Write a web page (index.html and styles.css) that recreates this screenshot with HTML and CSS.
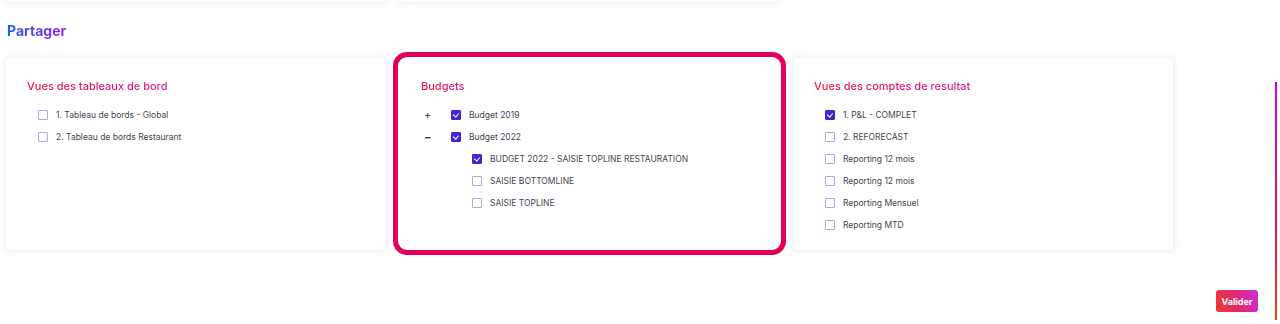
FILE: index.html
```html
<!DOCTYPE html>
<html>
<head>
    <title>Partager</title>
    <link rel="stylesheet" href="styles.css">
</head>
<body>
    <div class="top-row">
        <div class="top-card"></div>
        <div class="top-card second"></div>
    </div>

    <h2 class="section-title">Partager</h2>

    <div class="cards">
        <div class="card">
            <h3 class="card-title">Vues des tableaux de bord</h3>
            <div class="item"><span class="box"></span>1. Tableau de bords - Global</div>
            <div class="item"><span class="box"></span>2. Tableau de bords Restaurant</div>
        </div>

        <div class="card active">
            <h3 class="card-title">Budgets</h3>
            <div class="item"><span class="toggle">+</span><span class="box checked"></span>Budget 2019</div>
            <div class="item"><span class="toggle minus">&minus;</span><span class="box checked"></span>Budget 2022</div>
            <div class="item sub"><span class="box checked"></span>BUDGET 2022 - SAISIE TOPLINE RESTAURATION</div>
            <div class="item sub"><span class="box"></span>SAISIE BOTTOMLINE</div>
            <div class="item sub"><span class="box"></span>SAISIE TOPLINE</div>
        </div>

        <div class="card">
            <h3 class="card-title">Vues des comptes de resultat</h3>
            <div class="item"><span class="box checked"></span>1. P&amp;L - COMPLET</div>
            <div class="item"><span class="box"></span>2. REFORECAST</div>
            <div class="item"><span class="box"></span>Reporting 12 mois</div>
            <div class="item"><span class="box"></span>Reporting 12 mois</div>
            <div class="item"><span class="box"></span>Reporting Mensuel</div>
            <div class="item"><span class="box"></span>Reporting MTD</div>
        </div>
    </div>

    <div class="actions">
        <button class="btn">Valider</button>
    </div>

    <div class="scroll-bar"></div>
</body>
</html>
```

FILE: styles.css
```css
body { margin: 0; font-family: Inter, "Noto Sans", sans-serif; background: #fff; color: #454552; overflow: hidden; }
.top-row { display: flex; gap: 14px; padding-left: 6px; margin-top: -40px; height: 42px; }
.top-card { width: 380px; height: 42px; background: #fff; border-radius: 4px; box-shadow: 0 0 6px rgba(120, 100, 220, 0.18); }
.section-title { width: fit-content; margin: 20px 0 0 7px; font-size: 14px; font-weight: 700; line-height: 18px; background: linear-gradient(90deg, #1e62f0, #9b1ff0); -webkit-background-clip: text; background-clip: text; color: transparent; }
.cards { display: flex; align-items: stretch; gap: 7px; padding-left: 6px; margin-top: 12px; }
.card { width: 380px; margin: 6px 0 5px; box-sizing: border-box; padding: 20px 21px 14px; background: #fff; border-radius: 4px; box-shadow: 0 0 6px rgba(120, 100, 220, 0.2); }
.card.active { width: 393px; height: 203px; margin: 0; padding: 21px 18px 9px; border: 5px solid #e0005c; border-radius: 14px; box-shadow: none; }
.card.active .card-title, .card.active .item { margin-left: 5px; }
.card-title { width: fit-content; margin: 0 0 10px; font-size: 11px; font-weight: 500; line-height: 16px; background: linear-gradient(90deg, #e8163f, #d11b95); -webkit-background-clip: text; background-clip: text; color: transparent; }
.item { display: flex; align-items: center; height: 22px; padding-left: 11px; font-size: 8.5px; color: #444451; }
.card.active .item { padding-left: 3px; }
.card.active .item.sub { padding-left: 51px; }
.toggle { width: 27px; font-size: 11px; color: #333; line-height: 1; }
.toggle.minus { font-weight: 700; }
.box { width: 8px; height: 8px; margin-right: 8px; border: 1px solid #b8a3ea; border-radius: 1px; position: relative; flex-shrink: 0; }
.box.checked { background: linear-gradient(135deg, #4b2be6, #3a22c9); border-color: #3d24d0; }
.box.checked::after { content: ""; position: absolute; left: 2px; top: 1px; width: 3px; height: 4px; border: solid #fff; border-width: 0 1.2px 1.2px 0; transform: rotate(40deg); }
.actions { display: flex; justify-content: flex-end; padding-right: 22px; margin-top: 35px; }
.btn { width: 42px; height: 22px; padding: 0; border: none; border-radius: 3px; background: linear-gradient(70deg, #ea3a2a, #e0287a 55%, #c82ee0); color: #fff; font-family: inherit; font-size: 9px; font-weight: 700; cursor: pointer; }
.scroll-bar { position: absolute; right: 3px; top: 82px; width: 2px; height: 238px; background: linear-gradient(180deg, #c400f5, #e0105a 55%, #f04010); }
```
